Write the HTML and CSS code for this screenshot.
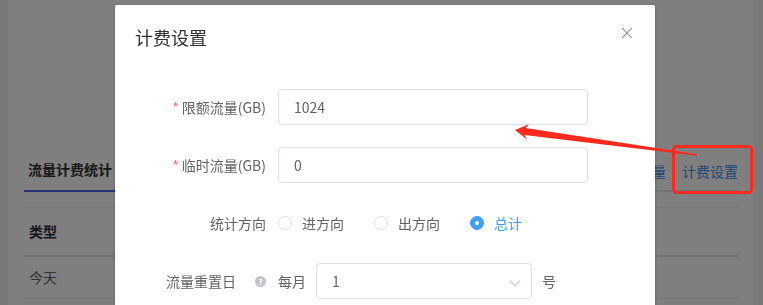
FILE: index.html
```html
<!DOCTYPE html>
<html lang="zh-CN">
<head>
<meta charset="utf-8">
<title>计费设置</title>
<link rel="stylesheet" href="styles.css">
</head>
<body>
<div class="page">
  <div class="card">
    <div class="tabs-bar">
      <div class="tabs">
        <div class="tab active">流量计费统计</div>
      </div>
      <div class="actions">
        <span class="link">限额流量</span>
        <span class="link">计费设置</span>
      </div>
    </div>
    <table class="table">
      <thead>
        <tr><th>类型</th><th></th><th></th><th></th></tr>
      </thead>
      <tbody>
        <tr><td>今天</td><td></td><td></td><td></td></tr>
      </tbody>
    </table>
  </div>
</div>

<div class="mask"></div>

<div class="dialog">
  <div class="dialog-header">
    <span class="dialog-title">计费设置</span>
    <button class="dialog-close" type="button" aria-label="关闭">
      <svg viewBox="0 0 16 16" width="16" height="16"><path d="M3.2 3.2 L12.8 12.8 M12.8 3.2 L3.2 12.8" stroke="#909399" stroke-width="1.2" fill="none"/></svg>
    </button>
  </div>
  <div class="dialog-body">
    <form class="form">
      <div class="form-item">
        <label class="form-label"><span class="req">*</span>限额流量(GB)</label>
        <div class="form-content"><input class="input" type="text" value="1024"></div>
      </div>
      <div class="form-item">
        <label class="form-label"><span class="req">*</span>临时流量(GB)</label>
        <div class="form-content"><input class="input" type="text" value="0"></div>
      </div>
      <div class="form-item">
        <label class="form-label">统计方向</label>
        <div class="form-content radio-group">
          <span class="radio"><span class="radio-inner"></span><span class="radio-label">进方向</span></span>
          <span class="radio"><span class="radio-inner"></span><span class="radio-label">出方向</span></span>
          <span class="radio checked"><span class="radio-inner"></span><span class="radio-label">总计</span></span>
        </div>
      </div>
      <div class="form-item">
        <label class="form-label">流量重置日<span class="help">?</span></label>
        <div class="form-content">
          <span class="text">每月</span>
          <div class="select">
            <span class="select-value">1</span>
            <svg class="chevron" viewBox="0 0 12 12" width="12" height="12"><path d="M0.8 3.6 L6 8.6 L11.2 3.6" stroke="#c0c4cc" stroke-width="1.1" fill="none"/></svg>
          </div>
          <span class="text suffix">号</span>
        </div>
      </div>
    </form>
  </div>
</div>

<svg class="annot" viewBox="0 0 763 305" width="763" height="305">
  <rect x="673.5" y="146.5" width="78" height="46" rx="3" ry="3" fill="none" stroke="#fa2a1c" stroke-width="3"/>
  <polygon fill="#fa2a1c" points="515,130 529,124.2 525.6,127.9 697.1,154.2 696.9,155.8 524.4,134.9 527,139.6"/>
</svg>
</body>
</html>
```

FILE: styles.css
```css
* { box-sizing: border-box; }

html, body {
  margin: 0;
  padding: 0;
  width: 763px;
  height: 305px;
  overflow: hidden;
}

body {
  background: #f3f3f4;
  font-family: "Noto Sans CJK SC", "Noto Sans", sans-serif;
  font-size: 14px;
  color: #303133;
}

.page {
  padding-left: 8px;
  padding-right: 10px;
  height: 305px;
}

.card {
  background: #fff;
  height: 305px;
  padding: 148px 15px 0 16px;
}

.tabs-bar {
  display: flex;
  justify-content: space-between;
  border-bottom: 2px solid #e4e7ed;
  height: 44px;
}

.tabs { display: flex; }

.tab {
  height: 44px;
  line-height: 42px;
  padding: 0 4px;
  font-weight: bold;
  color: #303133;
  font-size: 14px;
}

.tab.active {
  border-bottom: 2px solid #4b63e6;
}

.actions {
  display: flex;
  gap: 16px;
  padding-top: 4px;
  line-height: 38px;
}

.link { color: #3f8fee; }

.table {
  width: 100%;
  border-collapse: collapse;
  margin-top: 15px;
  border-top: 1px solid #ebeef5;
}

.table th, .table td {
  text-align: left;
  padding: 0 5px;
  font-size: 14px;
  width: 25%;
}

.table th {
  height: 48px;
  font-weight: bold;
  color: #303133;
  border-bottom: 2px solid #e3e6ee;
}

.table td {
  height: 43px;
  color: #606266;
  border-bottom: 1px solid #ebeef5;
}

.mask {
  position: fixed;
  left: 0;
  top: 0;
  width: 763px;
  height: 305px;
  background: rgba(0, 0, 0, 0.5);
}

.dialog {
  position: fixed;
  top: 5px;
  left: 115px;
  width: 540px;
  background: #fff;
  border-radius: 2px;
  box-shadow: 0 1px 3px rgba(0, 0, 0, 0.3);
}

.dialog-header {
  position: relative;
  padding: 20px 20px 10px;
}

.dialog-title {
  display: block;
  font-size: 18px;
  line-height: 24px;
  color: #303133;
}

.dialog-close {
  position: absolute;
  top: 20px;
  right: 20px;
  width: 16px;
  height: 16px;
  padding: 0;
  border: 0;
  background: transparent;
  display: flex;
}

.dialog-body {
  padding: 30px 20px;
}

.form { margin: 0; }

.form-item {
  display: flex;
  align-items: center;
  height: 36px;
  margin-bottom: 22px;
}

.form-label {
  flex: 0 0 143px;
  width: 143px;
  padding-right: 12px;
  text-align: right;
  line-height: 36px;
  color: #606266;
  font-size: 14px;
  display: flex;
  justify-content: flex-end;
  align-items: center;
}

.req {
  color: #f56c6c;
  margin-right: 3px;
}

.form-content {
  display: flex;
  align-items: center;
  height: 36px;
}

.input {
  width: 310px;
  height: 36px;
  border: 1px solid #dcdfe6;
  border-radius: 4px;
  padding: 0 15px;
  font-family: inherit;
  font-size: 14px;
  color: #606266;
  outline: none;
}

.radio {
  display: inline-flex;
  align-items: center;
  margin-right: 30px;
}

.radio-inner {
  width: 14px;
  height: 14px;
  border-radius: 50%;
  border: 1px solid #dcdfe6;
  background: #fff;
  display: inline-flex;
  align-items: center;
  justify-content: center;
}

.radio-label {
  padding-left: 10px;
  color: #606266;
  line-height: 36px;
}

.radio.checked .radio-inner {
  background: #409eff;
  border-color: #409eff;
}

.radio.checked .radio-inner::after {
  content: "";
  width: 4px;
  height: 4px;
  border-radius: 50%;
  background: #fff;
}

.radio.checked .radio-label { color: #409eff; }

.help {
  display: inline-block;
  width: 11px;
  height: 11px;
  margin-left: 19px;
  border-radius: 50%;
  background: #c0c4cc;
  color: #fff;
  font-size: 8px;
  font-weight: bold;
  line-height: 11px;
  text-align: center;
}

.text {
  color: #606266;
  line-height: 36px;
}

.select {
  margin-left: 10px;
  width: 216px;
  height: 36px;
  border: 1px solid #dcdfe6;
  border-radius: 4px;
  display: flex;
  align-items: center;
  justify-content: space-between;
  padding: 0 10px 0 15px;
}

.select-value { color: #606266; }

.chevron { margin-top: 3px; }

.suffix { margin-left: 10px; }

.annot {
  position: fixed;
  left: 0;
  top: 0;
  pointer-events: none;
}
```
